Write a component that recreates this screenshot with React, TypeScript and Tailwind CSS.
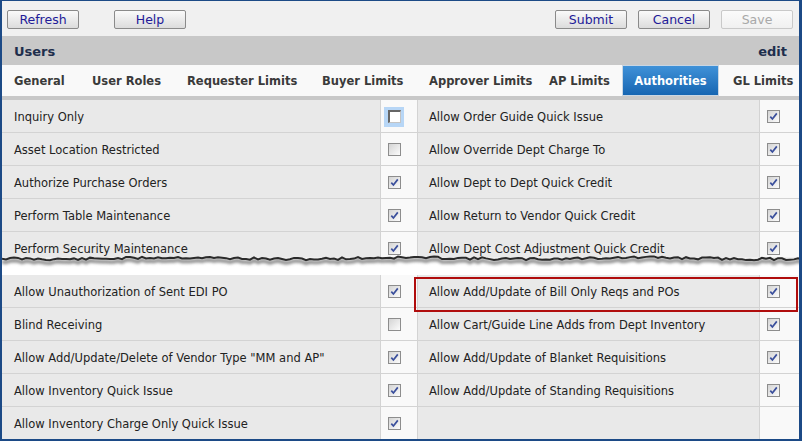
import React from 'react';

type Row = { label: string; checked: boolean; focused?: boolean };
type Pair = [Row | null, Row | null];

const topRows: Pair[] = [
  [{ label: 'Inquiry Only', checked: false, focused: true }, { label: 'Allow Order Guide Quick Issue', checked: true }],
  [{ label: 'Asset Location Restricted', checked: false }, { label: 'Allow Override Dept Charge To', checked: true }],
  [{ label: 'Authorize Purchase Orders', checked: true }, { label: 'Allow Dept to Dept Quick Credit', checked: true }],
  [{ label: 'Perform Table Maintenance', checked: true }, { label: 'Allow Return to Vendor Quick Credit', checked: true }],
  [{ label: 'Perform Security Maintenance', checked: true }, { label: 'Allow Dept Cost Adjustment Quick Credit', checked: true }],
];

const bottomRows: Pair[] = [
  [{ label: 'Allow Unauthorization of Sent EDI PO', checked: true }, { label: 'Allow Add/Update of Bill Only Reqs and POs', checked: true }],
  [{ label: 'Blind Receiving', checked: false }, { label: 'Allow Cart/Guide Line Adds from Dept Inventory', checked: true }],
  [{ label: 'Allow Add/Update/Delete of Vendor Type "MM and AP"', checked: true }, { label: 'Allow Add/Update of Blanket Requisitions', checked: true }],
  [{ label: 'Allow Inventory Quick Issue', checked: true }, { label: 'Allow Add/Update of Standing Requisitions', checked: true }],
  [{ label: 'Allow Inventory Charge Only Quick Issue', checked: true }, null],
];

const tabs = [
  { label: 'General', cls: 'w-[77px] pl-[12px]' },
  { label: 'User Roles', cls: 'w-[95px] pl-[13px]' },
  { label: 'Requester Limits', cls: 'w-[135px] pl-[13px]' },
  { label: 'Buyer Limits', cls: 'w-[107px] pl-[13px]' },
  { label: 'Approver Limits', cls: 'w-[120px] pl-[13px]' },
  { label: 'AP Limits', cls: 'w-[86px] pl-[13px]' },
];

function CheckBox({ checked, focused }: { checked: boolean; focused?: boolean }) {
  if (focused) {
    return (
      <div className="w-[20px] h-[20px] bg-[#b7d6f6] flex items-center justify-center -ml-[4px]">
        <div className="w-[13px] h-[13px] bg-white border-t-2 border-l-2 border-b border-r border-t-[#666] border-l-[#666] border-b-[#c4c4c4] border-r-[#c4c4c4]" />
      </div>
    );
  }
  return (
    <div className="w-[13px] h-[13px] border border-[#8d8d8d] bg-gradient-to-br from-[#d4d4d4] to-[#fcfcfc] relative">
      {checked && (
        <svg viewBox="0 0 11 11" className="absolute inset-0 w-[11px] h-[11px]">
          <path d="M2.3 5.6 L4.4 8 L8.8 2.4" fill="none" stroke="#3a4f9c" strokeWidth="1.7" />
        </svg>
      )}
    </div>
  );
}

function Button({ label, disabled }: { label: string; disabled?: boolean }) {
  return (
    <button
      className={`w-[72px] h-[19px] pt-[1px] rounded-[2px] border text-[12.5px] leading-none bg-gradient-to-b from-[#fafafa] to-[#dcdcdc] ${
        disabled ? 'border-[#c9c9c9] text-[#a8a8a8] from-[#fbfbfb] to-[#f0f0f0]' : 'border-[#8a8a8a] text-[#221a98]'
      }`}
    >
      {label}
    </button>
  );
}

function GridRows({ rows }: { rows: Pair[] }) {
  return (
    <div className="grid grid-cols-[379px_37px_342px_1fr]">
      {rows.map((pair, i) => (
        <React.Fragment key={i}>
          <div className="h-[33px] bg-[#e9e9e9] border-b border-r border-[#d3d3d3] flex items-center pl-[12px] pt-[4px] text-[#222] whitespace-nowrap">
            {pair[0]?.label}
          </div>
          <div className="h-[33px] bg-[#f9f9f9] border-b border-r border-[#d3d3d3] flex items-center pl-[7px] pt-[1px]">
            {pair[0] && <CheckBox checked={pair[0].checked} focused={pair[0].focused} />}
          </div>
          <div className="h-[33px] bg-[#e9e9e9] border-b border-r border-[#d3d3d3] flex items-center pl-[11px] pt-[4px] text-[#222] whitespace-nowrap">
            {pair[1]?.label}
          </div>
          <div className="h-[33px] bg-[#f9f9f9] border-b border-[#d3d3d3] flex items-center pl-[7px] pt-[1px]">
            {pair[1] && <CheckBox checked={pair[1].checked} />}
          </div>
        </React.Fragment>
      ))}
    </div>
  );
}

function TornEdge() {
  // jagged line for the cut between the two halves
  let seed = 11;
  const pts: string[] = [];
  for (let x = 0; x <= 800; x += 4) {
    seed = (seed * 9301 + 49297) % 233280;
    const y = 3 + (seed / 233280) * 2.6 + Math.sin(x / 37) * 0.8;
    pts.push(`${x},${y.toFixed(2)}`);
  }
  const line = 'M' + pts.join(' L');
  return (
    <div className="relative h-[21px] -mt-[3px]">
      <svg width="800" height="21" className="absolute left-0 top-0">
        <defs>
          <filter id="blur" x="-5%" y="-50%" width="110%" height="300%">
            <feGaussianBlur stdDeviation="1.6" />
          </filter>
        </defs>
        <path d={line + ' L800,21 L0,21 Z'} fill="#ffffff" />
        <path d={line} fill="none" stroke="#8a8a8a" strokeWidth="3.5" filter="url(#blur)" transform="translate(0,3)" />
        <path d={line} fill="none" stroke="#2a2a2a" strokeWidth="2" />
      </svg>
    </div>
  );
}

export default function App() {
  return (
    <div className="w-[802px] h-[441px] overflow-hidden border-l-2 border-r-[3px] border-t border-b-2 border-[#1c4a86] bg-[#f0f0f0] font-['DejaVu_Sans',sans-serif] text-[11.5px]">
      <div className="h-[35px] flex items-center pl-[5px] pr-[6px] pt-[2px]">
        <Button label="Refresh" />
        <div className="ml-[35px]">
          <Button label="Help" />
        </div>
        <div className="ml-auto flex gap-[11px]">
          <Button label="Submit" />
          <Button label="Cancel" />
          <Button label="Save" disabled />
        </div>
      </div>

      <div className="h-[29px] bg-[#c8c8c8] flex items-center justify-between pl-[12px] pr-[12px] pt-[2px] text-[13px] font-bold text-[#1e2e4c]">
        <span>Users</span>
        <span>edit</span>
      </div>

      <div className="h-[31px] bg-[#f9f9f9] flex items-stretch font-bold text-[#3a3a3a]">
        {tabs.map((t) => (
          <div key={t.label} className={`${t.cls} flex items-center pt-[3px] whitespace-nowrap`}>
            {t.label}
          </div>
        ))}
        <div className="w-[97px] flex items-center justify-center pt-[3px] text-white bg-gradient-to-b from-[#3f91d8] to-[#1666b2] border border-[#c9d6e3]">
          Authorities
        </div>
        <div className="flex-1 flex items-center pl-[14px] pt-[3px] whitespace-nowrap">GL Limits</div>
      </div>
      <div className="h-[4px] bg-[#c8c8c8]" />

      <div className="h-[157px] overflow-hidden">
        <GridRows rows={topRows} />
      </div>

      <TornEdge />

      <div className="relative">
        <GridRows rows={bottomRows} />
        <div className="absolute left-[412px] top-[2px] w-[384px] h-[35px] border-2 border-[#b00d0d] pointer-events-none" />
      </div>
    </div>
  );
}
